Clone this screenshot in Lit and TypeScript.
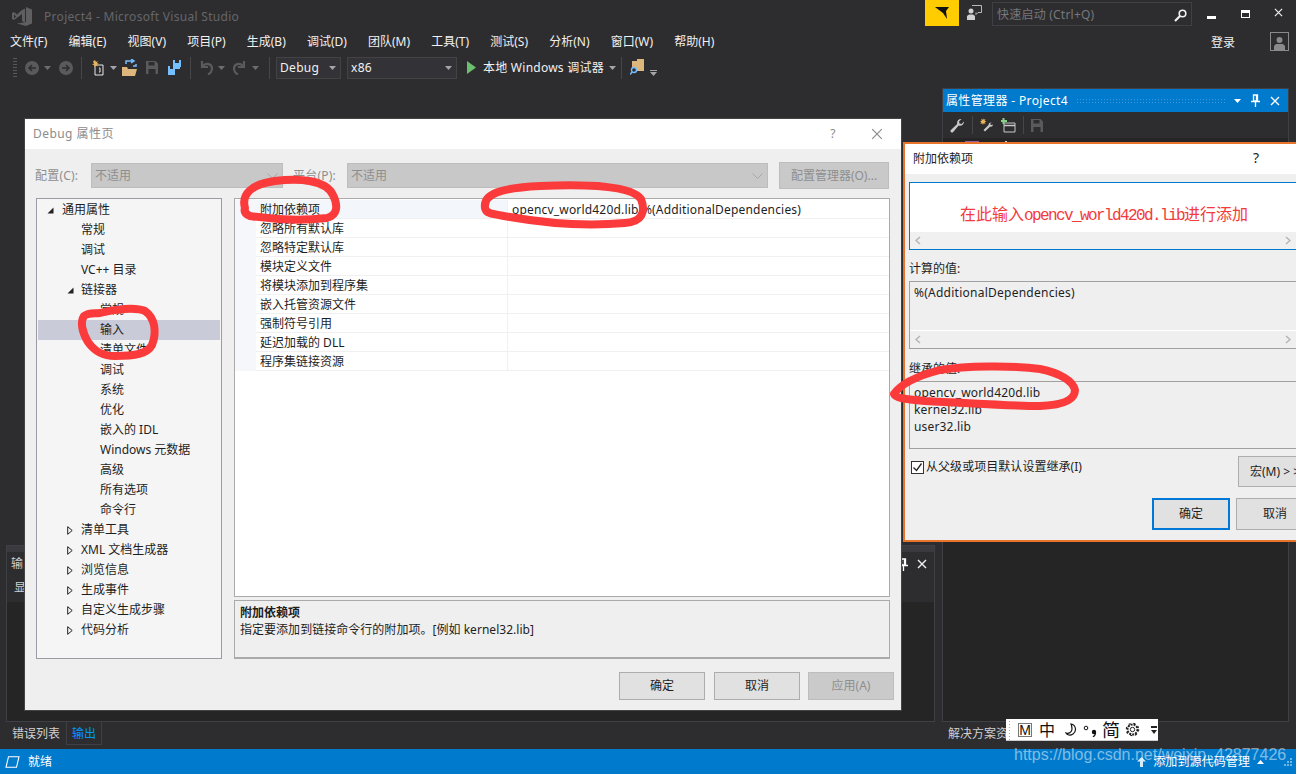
import { LitElement, html, css, svg } from "lit";
import { customElement } from "lit/decorators.js";

const MENUS = ["文件(F)", "编辑(E)", "视图(V)", "项目(P)", "生成(B)", "调试(D)", "团队(M)", "工具(T)", "测试(S)", "分析(N)", "窗口(W)", "帮助(H)"];

type TreeItem = { t: string; l: number; a?: "open" | "closed"; sel?: boolean };
const TREE: TreeItem[] = [
  { t: "通用属性", l: 0, a: "open" },
  { t: "常规", l: 1 },
  { t: "调试", l: 1 },
  { t: "VC++ 目录", l: 1 },
  { t: "链接器", l: 1, a: "open" },
  { t: "常规", l: 2 },
  { t: "输入", l: 2, sel: true },
  { t: "清单文件", l: 2 },
  { t: "调试", l: 2 },
  { t: "系统", l: 2 },
  { t: "优化", l: 2 },
  { t: "嵌入的 IDL", l: 2 },
  { t: "Windows 元数据", l: 2 },
  { t: "高级", l: 2 },
  { t: "所有选项", l: 2 },
  { t: "命令行", l: 2 },
  { t: "清单工具", l: 1, a: "closed" },
  { t: "XML 文档生成器", l: 1, a: "closed" },
  { t: "浏览信息", l: 1, a: "closed" },
  { t: "生成事件", l: 1, a: "closed" },
  { t: "自定义生成步骤", l: 1, a: "closed" },
  { t: "代码分析", l: 1, a: "closed" },
];

const PROPS = [
  ["附加依赖项", "opencv_world420d.lib;%(AdditionalDependencies)"],
  ["忽略所有默认库", ""],
  ["忽略特定默认库", ""],
  ["模块定义文件", ""],
  ["将模块添加到程序集", ""],
  ["嵌入托管资源文件", ""],
  ["强制符号引用", ""],
  ["延迟加载的 DLL", ""],
  ["程序集链接资源", ""],
];

const dd = (cls = "") => html`<svg class="dd ${cls}" width="7" height="4" viewBox="0 0 7 4"><path d="M0 0h7L3.5 4z" fill="currentColor"/></svg>`;
const x = (c: string, s = 10, w = 1.4) => html`<svg width="${s}" height="${s}" viewBox="0 0 10 10"><path d="M1 1l8 8M9 1l-8 8" stroke="${c}" stroke-width="${w}" fill="none"/></svg>`;
const pin = html`<svg width="9" height="13" viewBox="0 0 9 13"><path d="M2.5 1h4v6h-4zM0 7.5h9M4.500 8v5M5.500 1.500v5" stroke="#fff" stroke-width="1.300" fill="none"/></svg>`;
const wrench = (c: string) => html`<svg width="15" height="15" viewBox="0 0 15 15"><path d="M14 3.500a4 4 0 0 1-5.300 4L3.200 14a1.500 1.500 0 0 1-2.300-2l6.300-6A4 4 0 0 1 11.500 1L9 3.500l.5 2 2 .5z" fill="${c}"/></svg>`;
const saveIcon = (c: string) => html`<svg width="12" height="13" viewBox="0 0 12 13"><path d="M0 0h9.500L12 2.500V13H0zM2.500 1v3.500h6V1zM2.500 8v5h7V8z" fill="${c}" fill-rule="evenodd"/></svg>`;

@customElement("app-root")
export class AppRoot extends LitElement {
  static styles = css`
    :host { display: block; width: 1296px; height: 774px; position: relative; overflow: hidden; background: #2d2d30; font: 12px/16px "Noto Sans", "Noto Sans CJK SC", sans-serif; color: #1e1e1e; }
    * { box-sizing: border-box; }
    svg { display: block; flex: none; }
    .shell { display: flex; flex-direction: column; height: 774px; }

    .titlebar { height: 30px; display: flex; align-items: flex-start; flex: none; }
    .logo { margin: 7px 0 0 12px; }
    .app-title { margin: 9px 0 0 12px; color: #666669; line-height: 16px; letter-spacing: .3px; flex: 1; }
    .flag { width: 34px; height: 26px; background: #ffcc00; display: flex; align-items: center; justify-content: center; }
    .feedback { margin: 5px 0 0 8px; }
    .quick { width: 200px; height: 24px; margin: 2px 0 0 10px; border: 1px solid #3f3f46; display: flex; align-items: center; padding: 2px 4px 0; justify-content: space-between; color: #77777a; line-height: 20px; letter-spacing: .22px; }
    .winbtns { display: flex; width: 104px; align-items: center; height: 20px; padding: 5px 0 0 15px; gap: 24px; }
    .min { width: 9px; height: 3px; background: #fff; margin-top: 9px; }
    .max { width: 9px; height: 8px; border: 1px solid #fff; border-top-width: 3px; margin-top: 3px; margin-left: 1px; }

    .menubar { height: 22px; display: flex; flex: none; align-items: center; padding: 2px 0 0 10px; color: #f1f1f1; }
    .menu { line-height: 20px; }
    .menus { display: flex; gap: 21.150px; flex: 1; }
    .login { margin-right: 35px; margin-top: 1px; }
    .avatar { width: 19px; height: 19px; border: 1px solid #8a8a8a; margin: -1px 7px 0 0; display: flex; align-items: flex-end; justify-content: center; }

    .toolbar { height: 27px; margin-top: 2px; flex: none; display: flex; align-items: center; color: #f1f1f1; position: relative; }
    .grip { width: 4px; height: 22px; margin-left: 13px; background-image: radial-gradient(#58585b 0.7px, transparent 0.8px); background-size: 2px 3px; }
    .sep { width: 1px; height: 22px; background: #46464a; }
    .dd { color: #6d6d70; }
    .dd.on { color: #a5a5a8; }
    .tb { display: flex; align-items: center; }
    .combo { height: 22px; border: 1px solid #434346; background: #333337; display: flex; align-items: center; justify-content: space-between; padding: 0 4px 0 3px; line-height: 20px; letter-spacing: .3px; }
    .combo.debug { width: 65px; margin-left: 6px; }
    .combo.x86 { width: 110px; margin-left: 6px; }
    .m1 { margin-left: 5px; } .m2 { margin-left: 8px; } .m3 { margin-left: 10px; }
    .run { margin-left: 10px; }
    .runtext { margin-left: 7px; letter-spacing: .25px; line-height: 20px; }
    .lastdd { margin: 10px 0 0 5px; display: flex; flex-direction: column; gap: 1px; width: 7px; color: #a5a5a8; }
    .lastdd i { display: block; height: 1px; background: #a5a5a8; }

    .workspace { flex: 1; display: flex; align-items: stretch; min-height: 0; padding-top: 7px; }
    .left { width: 935px; padding-left: 6px; display: flex; flex-direction: column; justify-content: flex-end; }
    .output { height: 177px; border: 1px solid #3f3f46; background: #252526; display: flex; flex-direction: column; }
    .out-strip { height: 6px; background: #3b3b3f; flex: none; }
    .out-head { height: 50px; background: #2d2d30; flex: none; color: #d0d0d0; position: relative; }
    .out-title { display: flex; justify-content: space-between; padding: 0 7px 0 4px; height: 24px; align-items: center; }
    .out-btns { display: flex; gap: 9px; align-items: center; }
    .out-sub { padding-left: 7px; line-height: 20px; margin-top: 2px; }
    .rightpanel { width: 347px; margin-left: 7px; border: 1px solid #3f3f46; background: #252526; display: flex; flex-direction: column; }
    .rp-title { height: 23px; background: #007acc; color: #fff; display: flex; align-items: center; padding: 0 8px 0 3px; letter-spacing: .36px; flex: none; }
    .rp-dots { flex: 1; height: 5px; margin: 0 8px; background-image: radial-gradient(#3d9ad8 .8px, transparent .9px); background-size: 3px 3px; }
    .rp-btns { display: flex; align-items: center; gap: 10px; }
    .rp-tools { height: 26px; background: #2d2d30; display: flex; align-items: center; padding-left: 7px; flex: none; }
    .rp-tools .sep { height: 18px; margin: 0 7px; }
    .rp-peek { display: flex; padding: 3px 0 0 22px; gap: 26px; flex: none; }
    .rp-peek i { display: block; width: 14px; height: 4px; background: #9b5fa8; }
    .rp-peek b { display: block; width: 2px; height: 4px; background: #d0d0d0; }

    .tabs { height: 27px; flex: none; display: flex; color: #d0d0d0; padding-left: 6px; position: relative; }
    .tab { padding: 0 6px; line-height: 23px; height: 23px; white-space: nowrap; }
    .tab.on { color: #0097fb; border: 1px solid #3f3f46; border-top: 0; padding: 0 5px; }
    .tab.sol { margin-left: auto; margin-right: 276px; padding: 0; line-height: 22px; margin-top: 1px; }

    .status { height: 25px; flex: none; background: #007acc; color: #fff; display: flex; align-items: center; padding: 0 4px 0 5px; line-height: 25px; }
    .status .ready { margin-left: 8px; flex: 1; }
    .status .src { margin: 0 7px 0 7px; letter-spacing: .1px; }
    .status .tri { margin-right: 20px; }

    .dlg { position: absolute; background: #efefef; display: flex; flex-direction: column; }
    .dlg1 { left: 24px; top: 118px; width: 878px; height: 593px; border: 1px solid #444; padding: 0 7px 0 11px; }
    .d-head { background: #fff; display: flex; align-items: center; flex: none; }
    .dlg1 .d-head { margin: 0 -7px 0 -11px; height: 30px; padding: 0 18px 0 8px; color: #8c8c8c; letter-spacing: .45px; }
    .d-title { flex: 1; }
    .q { color: #8c8c8c; margin-right: 35px; }
    .cfg { display: flex; margin-top: 14px; height: 25px; width: 854px; align-items: center; color: #8e8e8e; flex: none; }
    .cfg .lbl { flex: none; line-height: 25px; letter-spacing: .2px; }
    .lbl.c { width: 56px; margin-left: -1px; }
    .lbl.p { width: 54px; margin-left: 10px; }
    .sel { height: 25px; background: #c8c8c8; border: 1px solid #bdbdbd; display: flex; align-items: center; justify-content: space-between; padding: 0 4px 0 3px; flex: none; }
    .sel.a { width: 192px; }
    .sel.b2 { width: 421px; }
    .cfg .btn { margin-left: 11px; width: 110px; height: 27px; background: #c9c9c9; border: 1px solid #bdbdbd; display: flex; align-items: center; justify-content: center; }
    .content { display: grid; grid-template-columns: 186px 656px; column-gap: 12px; width: 854px; height: 461px; margin-top: 10px; flex: none; }
    .tree { background: #f5f5f5; border: 1px solid #9b9ba6; padding-top: 1px; height: 461px; }
    .row { height: 20px; line-height: 20px; display: flex; align-items: center; margin: 0 1px; }
    .row.sel-row { background: #c9cbd9; }
    .row.l0 { padding-left: 9px; } .row.l1 { padding-left: 43px; } .row.l2 { padding-left: 62px; }
    .row.l1.arrow { padding-left: 29px; }
    .arrowbox { width: 15px; }
    .l1 .arrowbox { width: 14px; }
    .right { display: flex; flex-direction: column; gap: 3px; }
    .grid { height: 399px; background: #fff; border: 1px solid #aaa; padding-top: 1px; }
    .prow { height: 19px; display: flex; line-height: 20px; }
    .gutter { width: 21px; background: #f5f7fb; flex: none; }
    .pname { width: 252px; padding-left: 4px; border-bottom: 1px solid #f0f0f0; border-right: 1px solid #f0f0f0; flex: none; }
    .pval { flex: 1; padding-left: 4px; border-bottom: 1px solid #f0f0f0; letter-spacing: .18px; white-space: nowrap; }
    .prow.first .pname { background: #f3f6fb; }
    .desc { height: 59px; border: 1px solid #aaa; border-bottom-width: 2px; padding: 3px 5px; line-height: 17px; letter-spacing: .03px; }
    .desc b { font-weight: 700; display: block; }
    .d-foot { display: flex; justify-content: flex-end; margin-top: 13px; gap: 9px; flex: none; }
    .b { height: 28px; width: 86px; background: #e1e1e1; border: 1px solid #adadad; display: flex; align-items: center; justify-content: center; flex: none; }
    .b.dis { background: #cacaca; border-color: #bdbdbd; color: #8e8e8e; margin-left: -1px; }

    .dlg2 { left: 903px; top: 142px; width: 420px; height: 400px; border: 2px solid #e8742c; padding-left: 4px; }
    .dlg2 .d-head { margin-left: -4px; height: 30px; padding-left: 8px; }
    .dlg2 .q2 { position: absolute; left: 348px; top: 6px; font-size: 14px; }
    .edit { width: 389px; height: 68px; margin-top: 8px; border: 1px solid #007acc; background: #fff; display: flex; flex-direction: column; flex: none; }
    .edit-txt { flex: 1; display: flex; align-items: flex-end; padding-left: 50px; color: #f23c3c; font: 16px/24px "Liberation Mono", "Noto Sans CJK SC", monospace; padding-bottom: 4px; }
    .edit-txt span { letter-spacing: -1.600px; }
    .sbar { height: 17px; flex: none; background: #f0f0f0; display: flex; justify-content: space-between; align-items: center; padding: 0 6px 0 5px; }
    .box { width: 389px; height: 68px; border: 1px solid #a0a0a0; padding: 2px 4px 0; display: flex; flex-direction: column; flex: none; line-height: 17px; letter-spacing: .17px; }
    .box.withbar { padding: 0; }
    .box.withbar .t { flex: 1; padding: 2px 4px 0; letter-spacing: .25px; }
    .box.withbar .sbar { background: #efefef; border-top: 1px solid #fff; height: 18px; }
    .flabel { display: flex; align-items: flex-end; line-height: 18px; padding-bottom: 3px; height: 31px; flex: none; }
    .flabel.b2 { height: 32px; }
    .inh { display: flex; margin-top: 7px; height: 31px; flex: none; }
    .chk { width: 13px; height: 13px; border: 1px solid #333; background: #fff; margin: 5px 2px 0 2px; flex: none; }
    .inh-l { width: 312px; line-height: 22px; flex: none; letter-spacing: .05px; }
    .b.macro { width: 78px; height: 31px; justify-content: flex-start; padding-left: 11px; white-space: nowrap; }
    .d2foot { display: flex; gap: 6px; margin: 11px 0 0 243px; flex: none; }
    .b.wide { width: 78px; height: 32px; }
    .b.primary { border: 2px solid #0078d7; }

    .scribble { position: absolute; left: 0; top: 0; pointer-events: none; }
    .wm { position: absolute; left: 1014px; top: 745px; color: rgba(255, 255, 255, .5); font: 16px/20px "Liberation Sans", sans-serif; white-space: nowrap; }

    .ime { position: absolute; left: 1006px; top: 719px; width: 152px; height: 22px; background: #fff; border-bottom: 1px solid #ccc; display: flex; align-items: center; color: #111; font-size: 16px; line-height: 22px; }
    .ime-grip { width: 3px; height: 20px; margin-left: 2px; background-image: radial-gradient(#aaa .7px, transparent .8px); background-size: 3px 3px; }
    .ime-m { width: 14px; height: 14px; border: 1px solid #777; margin-left: 7px; font: 14px/12px "Liberation Sans", sans-serif; text-align: center; }
    .ime-z { margin-left: 7px; width: 18px; }
    .ime-j { margin-left: 4px; width: 18px; font-size: 18px; }
    .ime-more { margin-left: 11px; display: flex; flex-direction: column; gap: 2px; }
    .ime-more i { display: block; width: 6px; height: 2px; background: #222; }
    .ime-sym { margin-left: 5px; }
  `;

  private tree() {
    return TREE.map(
      (i) => html`<div class="row l${i.l} ${i.a ? "arrow" : ""} ${i.sel ? "sel-row" : ""}">
        ${i.a
          ? html`<span class="arrowbox">
              ${i.a === "open"
                ? html`<svg width="7" height="7" viewBox="0 0 7 7"><path d="M6.500 .5v6H.5z" fill="#222"/></svg>`
                : html`<svg width="6" height="9" viewBox="0 0 6 9"><path d="M.7.7l4.500 3.800L.7 8.300z" fill="none" stroke="#222"/></svg>`}
            </span>`
          : ""}
        <span>${i.t}</span>
      </div>`
    );
  }

  private sbar() {
    const chev = (d: string) => html`<svg width="6" height="9" viewBox="0 0 6 9"><path d="${d}" fill="none" stroke="#b4b4b4" stroke-width="1.500"/></svg>`;
    return html`<div class="sbar">${chev("M5 1L1 4.500 5 8")}${chev("M1 1l4 3.500L1 8")}</div>`;
  }

  render() {
    const chevDown = html`<svg width="11" height="6" viewBox="0 0 11 6"><path d="M.5.5l5 5 5-5" fill="none" stroke="#a8a8a8"/></svg>`;
    return html`
      <div class="shell">
        <div class="titlebar">
          <svg class="logo" width="20" height="19" viewBox="0 0 20 19"><path d="M14 0l6 2.500v14L14 19 5 16.500 14 15zM0 6l2-1 3 2.500L10 3l3-1.500v14L10 14V7L5.500 10.500 2 13l-2-1zM2 7.500v4L4 9.500z" fill="#5f5f62" fill-rule="evenodd"/></svg>
          <div class="app-title">Project4 - Microsoft Visual Studio</div>
          <div class="flag"><svg width="14" height="14" viewBox="0 0 14 14"><path d="M0 1h14l-3 4 1 8-4-6z" fill="#111"/></svg></div>
          <svg class="feedback" width="15" height="15" viewBox="0 0 15 15"><circle cx="4" cy="6" r="2.500" fill="#d0d0d0"/><path d="M0 15v-4l2-1.500h4l2 1.500v4z" fill="#d0d0d0"/><path d="M5 .5h9.500v7H11l-2 2v-2" fill="none" stroke="#b8b8b8"/></svg>
          <div class="quick">
            <span>快速启动 (Ctrl+Q)</span>
            <svg width="13" height="13" viewBox="0 0 13 13"><circle cx="8.500" cy="4.500" r="3.300" fill="none" stroke="#f1f1f1" stroke-width="1.600"/><path d="M6 7L1 12" stroke="#f1f1f1" stroke-width="2.200"/></svg>
          </div>
          <div class="winbtns"><div class="min"></div><div class="max"></div><div>${x("#f1f1f1", 9, 1.3)}</div></div>
        </div>

        <div class="menubar">
          <div class="menus">${MENUS.map((m) => html`<span class="menu">${m}</span>`)}</div>
          <span class="login">登录</span>
          <div class="avatar"><svg width="13" height="14" viewBox="0 0 13 14"><circle cx="6.500" cy="4" r="3" fill="#8a8a8a"/><path d="M1 14v-4l2-2h7l2 2v4z" fill="#8a8a8a"/></svg></div>
        </div>

        <div class="toolbar">
          <div class="grip"></div>
          <svg class="m2" width="14" height="14" viewBox="0 0 14 14"><circle cx="7" cy="7" r="7" fill="#5a5a5d"/><path d="M11 7H4M7 4L4 7l3 3" stroke="#2d2d30" stroke-width="1.500" fill="none"/></svg>
          <span class="m1">${dd()}</span>
          <svg class="m2" width="14" height="14" viewBox="0 0 14 14"><circle cx="7" cy="7" r="7" fill="#5a5a5d"/><path d="M3 7h7M7 4l3 3-3 3" stroke="#2d2d30" stroke-width="1.500" fill="none"/></svg>
          <div class="sep m2"></div>
          <svg class="m2" width="15" height="17" viewBox="0 0 15 17"><path d="M5 6h8v10H5z" fill="#2d2d30" stroke="#e8e8e8"/><path d="M9 9h1v4H9" stroke="#e8e8e8" fill="none"/><path d="M5 1l1 2 2-1-1 2 2 1-2 .5.5 2L6 6.500 4.500 8 4 6 2 5.500 4 4.500 3 2.500z" fill="#e8b45a"/></svg>
          <span class="m1 tb">${dd("on")}</span>
          <svg class="m1" width="16" height="17" viewBox="0 0 16 17"><path d="M0 8h5l1 2h9l-2 7H0z" fill="#dcb67a"/><path d="M4 5V2h7M9 0l3 2-3 2" fill="none" stroke="#75beff" stroke-width="1.500"/><path d="M11 7h3V5" stroke="#75beff" stroke-width="1.500" fill="none"/></svg>
          <span class="m2">${saveIcon("#5a5a5d")}</span>
          <svg class="m3" width="14" height="15" viewBox="0 0 14 15"><path d="M5 0h8v7h-1v2H5zM7 0v3h4V0z" fill="#75beff" fill-rule="evenodd"/><path d="M0 6h7v9H0zM2 6v3h3V6z" fill="#75beff" fill-rule="evenodd"/></svg>
          <div class="sep m2"></div>
          <svg class="m2" width="14" height="15" viewBox="0 0 14 15"><path d="M3 1v6h6M3.500 6.500C7 2 13 4 13 8.500c0 3-2 5-4 6" fill="none" stroke="#5a5a5d" stroke-width="2.200"/></svg>
          <span class="m1">${dd()}</span>
          <svg class="m2" width="14" height="15" viewBox="0 0 14 15"><path d="M11 1v6H5M10.500 6.500C7 2 1 4 1 8.500c0 3 2 5 4 6" fill="none" stroke="#5a5a5d" stroke-width="2.200"/></svg>
          <span class="m1">${dd()}</span>
          <div class="sep m3"></div>
          <div class="combo debug"><span>Debug</span>${dd("on")}</div>
          <div class="combo x86"><span>x86</span>${dd("on")}</div>
          <svg class="run" width="9" height="13" viewBox="0 0 9 13"><path d="M0 0l9 6.500L0 13z" fill="#6cbf6c"/></svg>
          <span class="runtext">本地 Windows 调试器</span>
          <span class="m1">${dd("on")}</span>
          <div class="sep m1"></div>
          <svg class="m2" width="15" height="17" viewBox="0 0 15 17"><path d="M2 2h5v-2h7v12H2z" fill="#dcb67a"/><circle cx="4" cy="11" r="2.500" fill="#2d2d30" stroke="#75beff" stroke-width="1.400"/><path d="M2.200 13L0 15.500" stroke="#75beff" stroke-width="1.500"/></svg>
          <div class="lastdd"><i></i>${dd("on")}</div>
        </div>

        <div class="workspace">
          <div class="left">
            <div class="output">
              <div class="out-strip"></div>
              <div class="out-head">
                <div class="out-title"><span>输出</span><div class="out-btns">${pin}${x("#f1f1f1")}</div></div>
                <div class="out-sub">显示</div>
              </div>
            </div>
          </div>
          <div class="rightpanel">
            <div class="rp-title">
              <span>属性管理器 - Project4</span>
              <div class="rp-dots"></div>
              <div class="rp-btns"><svg width="7" height="4" viewBox="0 0 7 4"><path d="M0 0h7L3.500 4z" fill="#fff"/></svg>${pin}${x("#fff")}</div>
            </div>
            <div class="rp-tools">
              ${wrench("#c8c8c8")}
              <div class="sep"></div>
              <svg width="13" height="14" viewBox="0 0 13 14"><path d="M3 0l.7 1.800L5.500 1 4.700 2.800l1.800.7-1.800.7.8 1.800-1.800-.8L3 7l-.7-1.800-1.800.8.8-1.800L0 3.500l1.800-.7L1 1l1.800.8z" fill="#e8b45a"/><path d="M13 6.500a2.500 2.500 0 0 1-3 2.200L5 13.500 3.500 12l5-5a2.500 2.500 0 0 1 3-2.500L10 6l1 1z" fill="#c8c8c8"/></svg>
              <svg class="m2" width="15" height="15" viewBox="0 0 15 15"><path d="M3 5h11v9H3z" fill="none" stroke="#c8c8c8"/><path d="M3 7.500h11" stroke="#c8c8c8" stroke-width="1.500"/><path d="M2.500 0v6M0 3h6" stroke="#89d185" stroke-width="2"/></svg>
              <div class="sep"></div>
              ${saveIcon("#5a5a5d")}
            </div>
            <div class="rp-peek"><i></i><b></b></div>
          </div>
        </div>

        <div class="tabs">
          <span class="tab">错误列表</span>
          <span class="tab on">输出</span>
          <span class="tab sol">解决方案资源</span>
        </div>

        <div class="status">
          <svg width="15" height="12" viewBox="0 0 15 12"><path d="M3.500 .7H14L11.500 11.300H1z" fill="none" stroke="#fff" stroke-width="1.100"/></svg>
          <span class="ready">就绪</span>
          <svg width="9" height="10" viewBox="0 0 9 10"><path d="M4.500 0L9 4.500H6V10H3V4.500H0z" fill="#d7ecf9"/></svg>
          <span class="src">添加到源代码管理</span>
          <svg class="tri" width="7" height="4" viewBox="0 0 7 4"><path d="M3.500 0L7 4H0z" fill="#fff"/></svg>
          <svg width="8" height="8" viewBox="0 0 8 8"><path d="M6 0h2v2H6zM3 3h2v2H3zM6 3h2v2H6zM0 6h2v2H0zM3 6h2v2H3zM6 6h2v2H6z" fill="#6db5e3"/></svg>
        </div>
      </div>

      <div class="dlg dlg1">
        <div class="d-head"><span class="d-title">Debug 属性页</span><span class="q">?</span>${x("#8c8c8c", 12, 1)}</div>
        <div class="cfg">
          <span class="lbl c">配置(C):</span>
          <div class="sel a"><span>不适用</span>${chevDown}</div>
          <span class="lbl p">平台(P):</span>
          <div class="sel b2"><span>不适用</span>${chevDown}</div>
          <div class="btn">配置管理器(O)...</div>
        </div>
        <div class="content">
          <div class="tree">${this.tree()}</div>
          <div class="right">
            <div class="grid">
              ${PROPS.map(
                (p, i) => html`<div class="prow ${i === 0 ? "first" : ""}">
                  <div class="gutter"></div>
                  <div class="pname">${p[0]}</div>
                  <div class="pval">${p[1]}</div>
                </div>`
              )}
            </div>
            <div class="desc"><b>附加依赖项</b>指定要添加到链接命令行的附加项。[例如 kernel32.lib]</div>
          </div>
        </div>
        <div class="d-foot">
          <div class="b">确定</div><div class="b">取消</div><div class="b dis">应用(A)</div>
        </div>
      </div>

      <div class="dlg dlg2">
        <div class="d-head"><span class="d-title">附加依赖项</span><span class="q2">?</span></div>
        <div class="edit">
          <div class="edit-txt">在此输入<span>opencv_world420d.lib</span>进行添加</div>
          ${this.sbar()}
        </div>
        <div class="flabel">计算的值:</div>
        <div class="box withbar"><div class="t">%(AdditionalDependencies)</div>${this.sbar()}</div>
        <div class="flabel b2">继承的值:</div>
        <div class="box"><div>opencv_world420d.lib</div><div>kernel32.lib</div><div>user32.lib</div></div>
        <div class="inh">
          <div class="chk"><svg width="11" height="11" viewBox="0 0 11 11"><path d="M1.500 5.500l3 3 5-7" fill="none" stroke="#222" stroke-width="1.300"/></svg></div>
          <div class="inh-l">从父级或项目默认设置继承(I)</div>
          <div class="b macro">宏(M) &gt; &gt;</div>
        </div>
        <div class="d2foot"><div class="b wide primary">确定</div><div class="b wide">取消</div></div>
      </div>

      <svg class="scribble" width="1296" height="774" viewBox="0 0 1296 774" fill="none" stroke="#fb3b3b" stroke-width="8" stroke-linejoin="round">
        ${svg`
          <path d="M245 208C241 194 252 184 275 181C300 178 326 180 333 195C338 205 338 215 327 218C300 221 270 219 250 216C245 214 244 211 245 208Z"/>
          <path d="M485 208C483 194 500 188 540 186C590 184 632 186 641 199C646 212 642 222 625 223C590 226 550 224 510 217C493 214 486 214 485 208Z"/>
          <path d="M100 313C115 309 136 307 145 311C155 318 157 332 152 345C147 354 135 356 115 356C103 356 95 352 88 342C82 332 80 322 84 316C90 312 95 314 100 313Z"/>
          <path d="M894 394C900 385 913 377 940 370C965 366 1010 365 1040 369C1060 373 1073 381 1075 390C1075 399 1065 405 1040 406C1010 406 970 403 925 401C905 399 895 398 894 394Z"/>
        `}
      </svg>

      <div class="wm">https://blog.csdn.net/weixin_42877426</div>

      <div class="ime">
        <div class="ime-grip"></div>
        <div class="ime-m">M</div>
        <span class="ime-z">中</span>
        <svg class="m2" width="13" height="14" viewBox="0 0 13 14"><path d="M6 1c5 1 6 7 2 10-3 2-6 1-7-1 3 1 6-1 6-4 0-2-.5-4-1-5z" fill="none" stroke="#111" stroke-width="1.200"/></svg>
        <svg class="ime-sym" width="15" height="14" viewBox="0 0 15 14"><circle cx="3" cy="5" r="1.800" fill="none" stroke="#111"/><circle cx="11" cy="9" r="2.200" fill="#111"/><path d="M12.500 10c0 2-1 3-2.500 4" stroke="#111" stroke-width="1.300" fill="none"/></svg>
        <span class="ime-j">简</span>
        <svg class="m1" width="15" height="15" viewBox="0 0 15 15"><circle cx="7.500" cy="7.500" r="5" fill="none" stroke="#222" stroke-width="2" stroke-dasharray="2 1"/><circle cx="7.500" cy="7.500" r="2.200" fill="none" stroke="#222"/><circle cx="7.500" cy="7.500" r="6.200" fill="none" stroke="#222" stroke-width="1.200" stroke-dasharray="2 2.900"/></svg>
        <div class="ime-more"><i></i><svg width="6" height="4" viewBox="0 0 6 4"><path d="M0 0h6L3 4z" fill="#222"/></svg></div>
      </div>
    `;
  }
}
